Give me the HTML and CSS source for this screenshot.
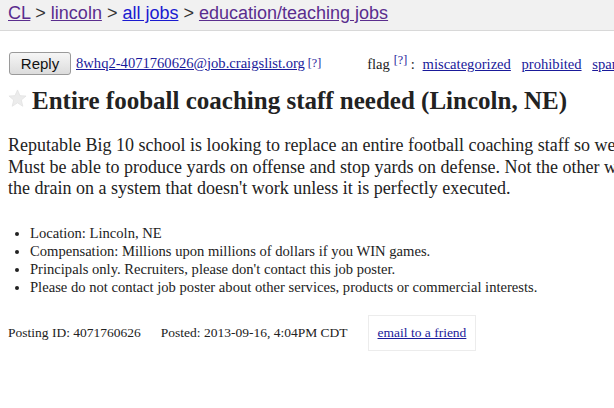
FILE: index.html
```html
<!DOCTYPE html>
<html>
<head>
<meta charset="utf-8">
<link rel="stylesheet" href="styles.css">
</head>
<body>
<header class="crumbs">
  <a class="v" href="#">CL</a> &gt; <a class="v" href="#">lincoln</a> &gt; <a class="u" href="#">all jobs</a> &gt; <a class="v" href="#">education/teaching jobs</a>
</header>
<div class="page">
  <div class="replyrow">
    <button class="reply">Reply</button>
    <a class="mail" href="#">8whq2-4071760626@job.craigslist.org</a><sup class="q"><a href="#">[?]</a></sup>
    <span class="flag">flag<sup class="q"><a href="#">[?]</a></sup> : <a href="#">miscategorized</a> <a href="#">prohibited</a> <a href="#">spam</a></span>
  </div>
  <h2 class="title">
    <svg class="star" viewBox="0 0 20 20" width="19" height="19"><polygon points="10,1 12.6,7 19,7.4 14,11.6 15.6,18.2 10,14.6 4.4,18.2 6,11.6 1,7.4 7.4,7" fill="#ececec" stroke="#e2e2e2" stroke-width="0.8"/></svg>
    Entire fooball coaching staff needed (Lincoln, NE)
  </h2>
  <p class="body">Reputable Big 10 school is looking to replace an entire football coaching staff so we<br>Must be able to produce yards on offense and stop yards on defense. Not the other way<br>the drain on a system that doesn't work unless it is perfectly executed.</p>
  <ul class="notes">
    <li>Location: Lincoln, NE</li>
    <li>Compensation: Millions upon millions of dollars if you WIN games.</li>
    <li>Principals only. Recruiters, please don't contact this job poster.</li>
    <li>Please do not contact job poster about other services, products or commercial interests.</li>
  </ul>
  <div class="foot">
    <span class="pid">Posting ID: 4071760626</span>
    <span class="posted">Posted: 2013-09-16, 4:04PM CDT</span>
    <span class="friend"><a href="#">email to a friend</a></span>
  </div>
</div>
</body>
</html>
```
FILE: styles.css
```css
html, body { margin: 0; padding: 0; background: #fff; overflow: hidden; }
body { font-family: "Liberation Serif", "Times New Roman", serif; color: #222; width: 614px; }
.crumbs {
  background: #f1f1f1;
  border-bottom: 1px solid #d8d8d8;
  height: 31px;
  box-sizing: border-box;
  padding: 3px 0 0 8px;
  font-family: "Liberation Sans", Arial, sans-serif;
  font-size: 18px;
  color: #333;
  white-space: nowrap;
}
.crumbs a.v { color: #5a2d8e; }
.crumbs a.u { color: #1a1ad0; }
.page { padding: 0 8px; overflow: hidden; }
.replyrow {
  margin-top: 20px;
  display: flex;
  align-items: center;
  white-space: nowrap;
  font-size: 14.6px;
  height: 24px;
}
.reply {
  font-family: "Liberation Sans", Arial, sans-serif;
  font-size: 15px;
  color: #111;
  height: 23px;
  width: 62px;
  padding: 0;
  margin: 0 5px 0 1px;
  border: 1px solid #9a9a9a;
  border-radius: 3px;
  background: linear-gradient(#f6f6f6, #dcdcdc);
  flex: none;
}
.replyrow a { color: #1a1a9a; }
.q { font-size: 12px; margin-left: 3px; vertical-align: 5px; }
.q a { text-decoration: none; }
.flag { margin-left: 46px; }
.flag .q { margin-left: 4px; }
.flag > a { margin-left: 4px; }
.flag > a + a { margin-left: 7px; }
.title {
  display: flex;
  align-items: center;
  margin: 12px 0 0 0;
  font-size: 25px;
  font-weight: bold;
  color: #222;
  white-space: nowrap;
}
.star { margin: -6px 5px 0 0; flex: none; }
.body {
  margin: 20px 0 0 0;
  font-size: 18px;
  line-height: 21.5px;
  white-space: nowrap;
}
.notes {
  margin: 24px 0 0 0;
  padding-left: 22px;
  font-size: 14.6px;
  line-height: 18.3px;
}
.foot {
  margin-top: 18px;
  display: flex;
  align-items: center;
  font-size: 13.5px;
}
.posted { margin-left: 20px; }
.friend {
  margin-left: 20px;
  border: 1px solid #ececec;
  padding: 9px 9px;
}
.friend a { color: #1a1a9a; }
```
